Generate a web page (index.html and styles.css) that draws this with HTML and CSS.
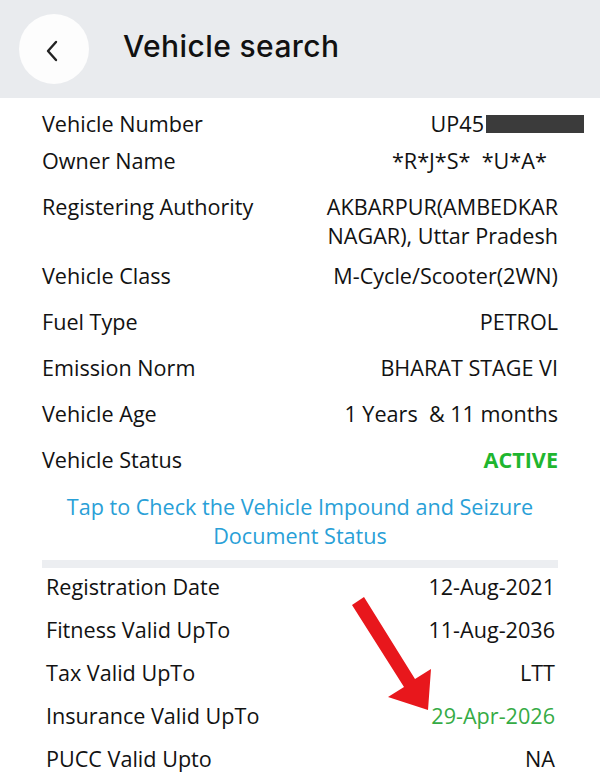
FILE: index.html
```html
<!DOCTYPE html>
<html lang="en">
<head>
<meta charset="utf-8">
<title>Vehicle search</title>
<link rel="stylesheet" href="styles.css">
</head>
<body>
<div class="page">
  <header class="topbar">
    <button class="back" aria-label="Back">
      <svg width="16" height="24" viewBox="0 0 16 24"><path d="M12 3 L4 12 L12 21" fill="none" stroke="#222" stroke-width="2.4" stroke-linecap="round" stroke-linejoin="round"/></svg>
    </button>
    <h1 class="title">Vehicle search</h1>
  </header>

  <section class="details">
    <div class="group tight">
      <div class="row"><span class="label">Vehicle Number</span><span class="value plate">UP45<span class="redact"></span></span></div>
      <div class="row"><span class="label">Owner Name</span><span class="value pre">*R*J*S*  *U*A*  </span></div>
    </div>
    <div class="group">
      <div class="row wrapped"><span class="label">Registering Authority</span><span class="value">AKBARPUR(AMBEDKAR NAGAR), Uttar Pradesh</span></div>
      <div class="row"><span class="label">Vehicle Class</span><span class="value">M-Cycle/Scooter(2WN)</span></div>
      <div class="row"><span class="label">Fuel Type</span><span class="value">PETROL</span></div>
      <div class="row"><span class="label">Emission Norm</span><span class="value">BHARAT STAGE VI</span></div>
      <div class="row"><span class="label">Vehicle Age</span><span class="value pre">1 Years  &amp; 11 months</span></div>
      <div class="row"><span class="label">Vehicle Status</span><span class="value active">ACTIVE</span></div>
    </div>
    <p class="link">Tap to Check the Vehicle Impound and Seizure Document Status</p>
    <div class="divider"></div>
  </section>

  <section class="validity">
    <div class="row"><span class="label">Registration Date</span><span class="value">12-Aug-2021</span></div>
    <div class="row"><span class="label">Fitness Valid UpTo</span><span class="value">11-Aug-2036</span></div>
    <div class="row"><span class="label">Tax Valid UpTo</span><span class="value">LTT</span></div>
    <div class="row"><span class="label">Insurance Valid UpTo</span><span class="value valid">29-Apr-2026</span></div>
    <div class="row"><span class="label">PUCC Valid Upto</span><span class="value">NA</span></div>
  </section>

  <svg class="arrow" width="600" height="782" viewBox="0 0 600 782">
    <polygon points="352,605 364,597 415,679 431,669 428,710 388,697 404,687" fill="#e8171c"/>
  </svg>
</div>
</body>
</html>
```

FILE: styles.css
```css
* { box-sizing: border-box; }
html, body { margin: 0; padding: 0; background: #fff; }
body {
  font-family: "Open Sans", "Liberation Sans", sans-serif;
  color: #121212;
  width: 600px;
  height: 782px;
  overflow: hidden;
}
.page { position: relative; width: 600px; height: 782px; }

.topbar {
  height: 98px;
  background: #e9ebee;
  display: flex;
  align-items: center;
  padding-left: 19px;
}
.back {
  width: 70px;
  height: 70px;
  border-radius: 50%;
  border: none;
  background: #fdfdfd;
  display: flex;
  align-items: center;
  justify-content: center;
  padding: 0;
}
.back svg { margin-left: -4px; margin-top: 4px; }
.title {
  margin: 0 0 6px 34px;
  font-family: "Inter", "Open Sans", sans-serif;
  font-weight: 500;
  font-size: 30px;
  letter-spacing: 0.4px;
  color: #111;
}

.details { padding: 11px 42px 0 42px; }
.group { display: flex; flex-direction: column; gap: 17px; }
.group.tight { gap: 8px; margin-bottom: 17px; }

.row {
  display: grid;
  grid-template-columns: 1fr 1fr;
  font-size: 21.6px;
  font-weight: 500;
  line-height: 29px;
}
.row.wrapped { margin-bottom: -6px; }
.label { white-space: nowrap; }
.value { text-align: right; }
.pre { white-space: pre; }
.plate { display: flex; justify-content: flex-end; align-items: center; }
.redact {
  display: inline-block;
  width: 98px;
  height: 18px;
  background: #3b3b3b;
  margin-right: -26px;
  margin-left: 2px;
}
.active { color: #1fb62f; font-weight: 700; }
.valid { color: #35ab45; }

.link {
  margin: 18px 0 0 0;
  text-align: center;
  color: #29a0d7;
  font-size: 21.6px;
  font-weight: 500;
  line-height: 29px;
  padding: 0 10px;
}
.divider {
  height: 8px;
  background: #eceef1;
  margin-top: 10px;
}

.validity {
  padding: 4px 45px 0 46px;
  display: flex;
  flex-direction: column;
  gap: 14px;
}

.arrow { position: absolute; left: 0; top: 0; pointer-events: none; }
```
